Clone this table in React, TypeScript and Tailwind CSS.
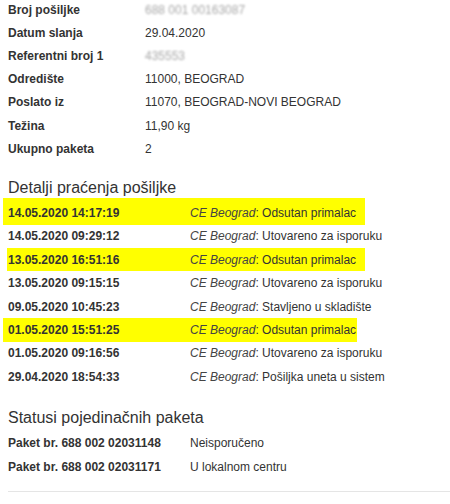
const shipmentInfo = [
    { label: "Broj pošiljke", value: "688 001 00163087", hidden: true },
    { label: "Datum slanja", value: "29.04.2020" },
    { label: "Referentni broj 1", value: "435553", hidden: true },
    { label: "Odredište", value: "11000, BEOGRAD" },
    { label: "Poslato iz", value: "11070, BEOGRAD-NOVI BEOGRAD" },
    { label: "Težina", value: "11,90 kg" },
    { label: "Ukupno paketa", value: "2" },
];

// highlight sizes differ per row, same as in the screenshot
const trackingEvents = [
    {
        time: "14.05.2020 14:17:19",
        status: "Odsutan primalac",
        row: "ml-[3px] w-[362px] bg-[#ffff00] -mt-[3px] pt-[3px] h-[26.4px]",
        date: "w-[187px] pl-[5px]",
    },
    { time: "14.05.2020 09:29:12", status: "Utovareno za isporuku" },
    {
        time: "13.05.2020 16:51:16",
        status: "Odsutan primalac",
        row: "ml-[7px] w-[358px] bg-[#ffff00] h-[23.4px]",
        date: "w-[183px] pl-[1px]",
    },
    { time: "13.05.2020 09:15:15", status: "Utovareno za isporuku" },
    { time: "09.05.2020 10:45:23", status: "Stavljeno u skladište" },
    {
        time: "01.05.2020 15:51:25",
        status: "Odsutan primalac",
        row: "ml-[3px] w-[354px] bg-[#ffff00] h-[23.4px]",
        date: "w-[187px] pl-[5px]",
    },
    { time: "01.05.2020 09:16:56", status: "Utovareno za isporuku" },
    { time: "29.04.2020 18:54:33", status: "Pošiljka uneta u sistem" },
];

const packages = [
    { id: "688 002 02031148", status: "Neisporučeno" },
    { id: "688 002 02031171", status: "U lokalnom centru" },
];

const App = () => {
    return (
        <div
            className="w-[450px] h-[504px] overflow-hidden bg-white text-[#333] text-[12px]"
            style={{ fontFamily: '"Liberation Sans", Arial, sans-serif' }}
        >
            <div className="-mt-[2px] pl-2">
                {shipmentInfo.map((row) => (
                    <div key={row.label} className="flex items-center h-[23.2px]">
                        <span className="w-[137px] font-bold">{row.label}</span>
                        <span className={row.hidden ? "text-[#a8a8a8] blur-[1px]" : ""}>
                            {row.value}
                        </span>
                    </div>
                ))}
            </div>

            <h2 className="mt-[14px] pl-2 h-[27px] flex items-center text-[16px] text-[#333]">
                Detalji praćenja pošiljke
            </h2>

            <div>
                {trackingEvents.map((event) => (
                    <div
                        key={event.time}
                        className={`flex items-center whitespace-nowrap ${event.row ?? "h-[23.4px]"}`}
                    >
                        <span className={`shrink-0 font-bold ${event.date ?? "w-[190px] pl-2"}`}>
                            {event.time}
                        </span>
                        <span>
                            <i className="text-[#444]">CE Beograd</i>: {event.status}
                        </span>
                    </div>
                ))}
            </div>

            <h2 className="mt-[17px] pl-2 h-[26px] flex items-center text-[16px] text-[#333]">
                Statusi pojedinačnih paketa
            </h2>

            <div className="pl-2">
                {packages.map((pkg) => (
                    <div key={pkg.id} className="flex items-center h-[23.4px]">
                        <span className="w-[182px] font-bold">Paket br. {pkg.id}</span>
                        <span>{pkg.status}</span>
                    </div>
                ))}
            </div>

            <div className="ml-2 mt-[13px] border-t border-[#e5e5e5]" />
        </div>
    );
};

export default App;
